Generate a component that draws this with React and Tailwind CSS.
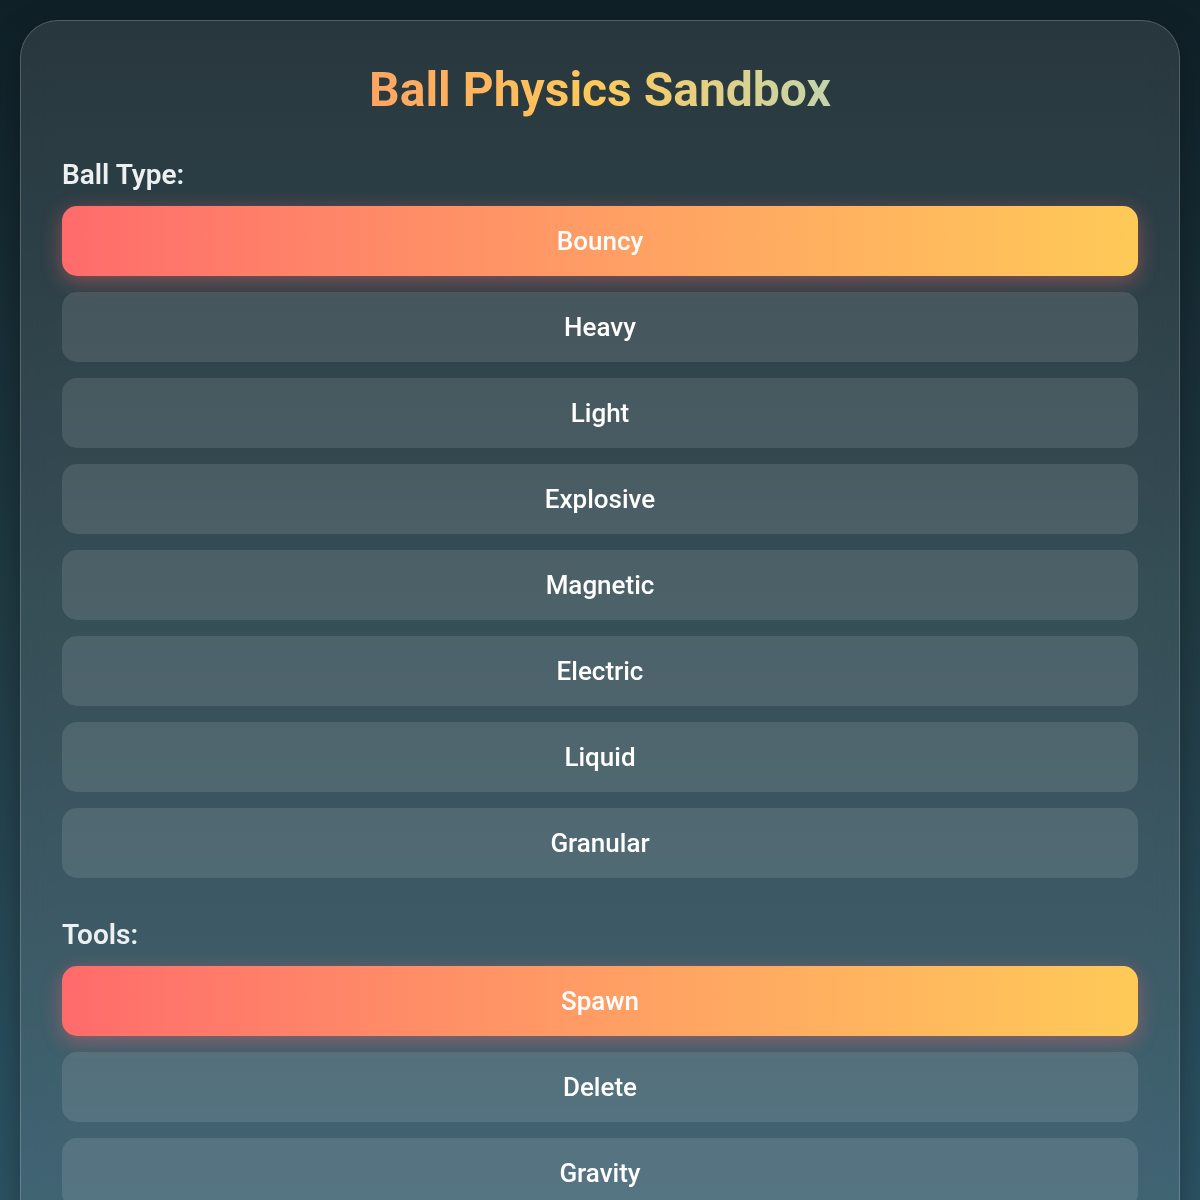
const ballTypes = ["Bouncy", "Heavy", "Light", "Explosive", "Magnetic", "Electric", "Liquid", "Granular"];
const tools = ["Spawn", "Delete", "Gravity", "Wind"];

function OptionButton({ label, active }) {
  return (
    <button
      className={
        active
          ? "flex h-[70px] w-full items-center justify-center rounded-[15px] bg-linear-to-r from-[#ff6b6b] to-[#feca57] pt-[2px] text-[26px] font-medium text-white shadow-[0_5px_20px_rgba(255,107,107,0.4)]"
          : "flex h-[70px] w-full items-center justify-center rounded-[15px] bg-white/[0.11] pt-[2px] text-[26px] font-medium text-white"
      }
    >
      {label}
    </button>
  );
}

function Section({ title, items, active }) {
  return (
    <section className="mb-[37px]">
      <h2 className="mb-3 pt-px text-[28px] leading-[38px] font-semibold text-[#ecf0f1]">{title}</h2>
      <div className="flex flex-col gap-4">
        {items.map((item) => (
          <OptionButton key={item} label={item} active={item === active} />
        ))}
      </div>
    </section>
  );
}

export default function App() {
  return (
    <main className="min-h-screen bg-linear-to-b from-[#0f2027] via-[#203a43] to-[#2c5364] bg-fixed p-5 font-['Roboto',sans-serif] text-white">
      <div className="rounded-[38px] border border-white/20 bg-white/10 px-[41px] pt-10 pb-10 shadow-[0_8px_32px_rgba(0,0,0,0.3)] backdrop-blur-md">
        <h1 className="mb-[36px] bg-linear-to-r from-[#ff6b6b] via-[#feca57] to-[#48dbfb] bg-clip-text text-center text-[48px] leading-[1.2] font-bold text-transparent">
          Ball Physics Sandbox
        </h1>
        <Section title="Ball Type:" items={ballTypes} active="Bouncy" />
        <Section title="Tools:" items={tools} active="Spawn" />
      </div>
    </main>
  );
}
